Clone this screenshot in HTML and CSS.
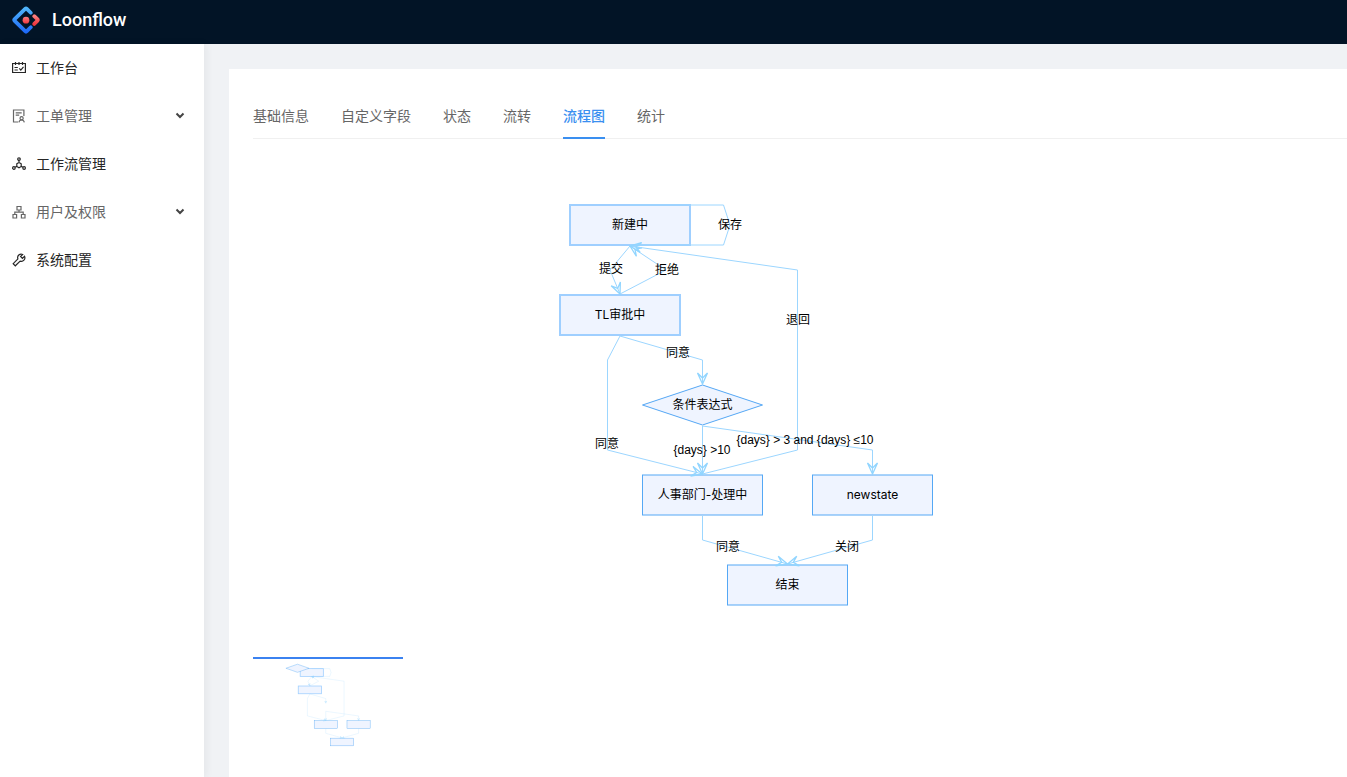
FILE: index.html
```html
<!DOCTYPE html>
<html lang="zh-CN">
<head>
<meta charset="utf-8">
<title>Loonflow</title>
<link rel="stylesheet" href="styles.css">
</head>
<body>
<header class="header">
  <a class="brand" href="#">
    <svg class="logo" viewBox="0 0 200 200" aria-hidden="true">
      <defs>
        <linearGradient id="blue" x1="0" y1="0" x2="0" y2="1"><stop offset="0" stop-color="#4fb4fa"/><stop offset="1" stop-color="#1f6bf8"/></linearGradient>
        <linearGradient id="red" x1="0" y1="0" x2="0" y2="1"><stop offset="0" stop-color="#fa7e7e"/><stop offset="1" stop-color="#f0383f"/></linearGradient>
      </defs>
      <path d="M134 48 L106 20 Q100 14 94 20 L19 94 Q13 100 19 106 L94 180 Q100 186 106 180 L134 152" fill="none" stroke="url(#blue)" stroke-width="27" stroke-linecap="round"/>
      <path d="M159 73 L181 94 Q187 100 181 106 L159 128" fill="none" stroke="url(#red)" stroke-width="27" stroke-linecap="round"/>
      <circle cx="100" cy="101" r="24" fill="url(#red)"/>
    </svg>
    <span class="brand-name">Loonflow</span>
  </a>
</header>
<div class="layout">
  <nav class="sidebar">
    <a class="menu-item" href="#">
      <svg class="icon" viewBox="0 0 14 14" aria-hidden="true"><path d="M.6 2.500h12.800v9H.6zM3.500 1v3M7 1v3M10.500 1v3M2.500 6.500h3.300M2.500 9h3.300M7.300 7.400l1.500 1.700 2.700-3.200"/></svg>
      <span>工作台</span>
    </a>
    <button class="menu-item submenu" type="button">
      <svg class="icon" viewBox="0 0 14 14" aria-hidden="true"><path d="M6 13H1.500V1h10.400v6M3.700 3.800h6M3.700 6.200h3.500M6.900 13.400c.2-1.500 1.200-2.400 2.700-2.400s2.500.9 2.700 2.400"/><circle cx="9.600" cy="9.300" r="1.600"/></svg>
      <span>工单管理</span>
      <svg class="chevron" viewBox="0 0 10 10" aria-hidden="true"><path d="M1.500 2.500l3.500 3.500L8.500 2.500"/></svg>
    </button>
    <a class="menu-item" href="#">
      <svg class="icon" viewBox="0 0 14 14" aria-hidden="true"><circle cx="7" cy="2.100" r="1.300"/><circle cx="1.900" cy="11" r="1.300"/><circle cx="12.100" cy="11" r="1.300"/><path d="M7 3.500v2M4.800 6.800L7 5.500l2.200 1.300v2.600L7 10.700 4.800 9.400zM4.800 9.200l-1.700 1M9.200 9.200l1.700 1"/></svg>
      <span>工作流管理</span>
    </a>
    <button class="menu-item submenu" type="button">
      <svg class="icon" viewBox="0 0 14 14" aria-hidden="true"><path d="M5 1.500h4v3.500H5zM1 9.500h3.600V13H1zM9.400 9.500H13V13H9.400zM7 5v2.200M2.800 9.500V7.200h8.400v2.300"/></svg>
      <span>用户及权限</span>
      <svg class="chevron" viewBox="0 0 10 10" aria-hidden="true"><path d="M1.500 2.500l3.500 3.500L8.500 2.500"/></svg>
    </button>
    <a class="menu-item" href="#">
      <svg class="icon" viewBox="0 0 14 14" aria-hidden="true"><path d="M10.700 1.500a3.500 3.500 0 0 0-4.800 4.400L1.200 10.700l2.100 2.100L8.100 8.100a3.500 3.500 0 0 0 4.400-4.800L10.400 5.400 8.600 3.600z"/></svg>
      <span>系统配置</span>
    </a>
  </nav>
  <main class="content">
    <section class="card">
      <div class="tabs" role="tablist">
        <button class="tab" type="button" role="tab">基础信息</button>
        <button class="tab" type="button" role="tab">自定义字段</button>
        <button class="tab" type="button" role="tab">状态</button>
        <button class="tab" type="button" role="tab">流转</button>
        <button class="tab active" type="button" role="tab" aria-selected="true">流程图</button>
        <button class="tab" type="button" role="tab">统计</button>
      </div>
      <svg class="flow" width="800" height="502" viewBox="0 0 800 502" role="img" aria-label="流程图">
        <defs>
          <marker id="vee" markerUnits="userSpaceOnUse" markerWidth="16" markerHeight="16" viewBox="-13 -8 16 16" refX="0" refY="0" orient="auto">
            <path class="arrow" d="M0 0L-11 -5L-6 0L-11 5Z"/>
          </marker>
        </defs>
        <g id="boxes">
          <rect class="node visited" x="317" y="50" width="120" height="40"/>
          <rect class="node visited" x="307" y="140" width="120" height="40"/>
          <rect class="node" x="389.500" y="320" width="120" height="40"/>
          <rect class="node" x="559.500" y="320" width="120" height="40"/>
          <rect class="node" x="474.500" y="410" width="120" height="40"/>
        </g>
        <path class="node" d="M449.500 230L509.500 250L449.500 270L389.500 250Z"/>
        <g id="edges" class="edges">
          <path d="M377 50H470.500L477 70L470.500 90H377"/>
          <path d="M377 91L357 115L367 139"/>
          <path d="M367 139L413 115L377 91"/>
          <path d="M449.500 319L544.500 295V115L377 91"/>
          <path d="M367 181L354.500 205V295L449.500 319"/>
          <path d="M367 181L449.500 205V229"/>
          <path d="M449.500 271V319"/>
          <path d="M449.500 271L619.500 295V319"/>
          <path d="M449.500 361V385L534.500 409"/>
          <path d="M619.500 361V385L534.500 409"/>
        </g>
        <g class="labels">
          <text x="377" y="74">新建中</text>
          <text x="367" y="164">TL审批中</text>
          <text x="449.500" y="254">条件表达式</text>
          <text x="449.500" y="344">人事部门-处理中</text>
          <text x="619.500" y="344">newstate</text>
          <text x="534.500" y="434">结束</text>
        </g>
        <g class="labels edge-labels">
          <text x="477" y="74">保存</text>
          <text x="358" y="118">提交</text>
          <text x="414" y="119">拒绝</text>
          <text x="545" y="169">退回</text>
          <text x="425" y="202">同意</text>
          <text x="354" y="293">同意</text>
          <text x="449" y="299">{days} &gt;10</text>
          <text x="552" y="289">{days} &gt; 3 and {days} ≤10</text>
          <text x="475" y="396">同意</text>
          <text x="594" y="396">关闭</text>
        </g>
      </svg>
      <div class="minimap">
        <svg width="150" height="90" viewBox="0 0 150 90" aria-hidden="true">
          <g transform="translate(-14 0) scale(.193)">
            <use href="#boxes"/>
            <use href="#edges"/>
            <path class="node" d="M303 27L363 48L303 69L243 48Z"/>
          </g>
        </svg>
      </div>
    </section>
  </main>
</div>
</body>
</html>
```
FILE: styles.css
```css
* { box-sizing: border-box; }
body {
  margin: 0;
  min-height: 100vh;
  display: flex;
  flex-direction: column;
  background: #f0f2f5;
  font: 14px/22px "Liberation Sans", "Noto Sans CJK SC", sans-serif;
  color: #262626;
}
button { font: inherit; border: 0; background: none; padding: 0; cursor: pointer; }
a { color: inherit; text-decoration: none; }

.header { height: 44px; padding: 0 12px; background: #021426; display: flex; align-items: center; }
.brand { display: flex; align-items: center; gap: 12px; height: 40px; margin-bottom: 4px; color: #fff; }
.logo { width: 28px; height: 28px; }
.brand-name { font: 500 18px/28px Roboto, sans-serif; }

.layout { flex: 1; display: flex; }
.sidebar { width: 204px; flex: none; background: #fff; box-shadow: 2px 0 8px rgba(29, 35, 41, .06); }
.menu-item { width: 100%; height: 48px; padding: 0 19px 0 12px; display: flex; align-items: center; gap: 10px; color: #262626; text-align: left; }
.submenu { color: #666; }
.icon { width: 14px; height: 14px; fill: none; stroke: currentColor; stroke-width: 1.2; }
.chevron { width: 10px; height: 10px; margin-left: auto; fill: none; stroke: #444; stroke-width: 2; }

.content { flex: 1; min-width: 0; padding: 25px 0 0 25px; display: flex; }
.card { flex: 1; min-width: 0; overflow: hidden; padding: 24px 0 24px 24px; background: #fff; }
.tabs { display: flex; gap: 32px; border-bottom: 1px solid #f0f0f0; margin-bottom: 16px; }
.tab { padding: 13px 0 11px; margin-bottom: -1px; color: #666; border-bottom: 2px solid transparent; line-height: 20px; }
.tab.active { color: #3a8ff0; border-color: #3a8ff0; font-weight: 500; }

.flow { display: block; --line: 1; --frame: 2; }
.node { fill: #eff4ff; stroke: #55a8f5; stroke-width: var(--line); }
.visited { stroke: #9fcfff; stroke-width: var(--frame); }
.edges path { fill: none; stroke: #9cd6ff; stroke-width: 1; marker-end: url(#vee); }
.edges path:first-child { marker-end: none; }
.arrow { fill: none; stroke: #91d5ff; stroke-width: 1.3; }
.labels { font: 12px Inter, "Noto Sans CJK SC", sans-serif; fill: #000; text-anchor: middle; }
.edge-labels { font-family: "Liberation Sans", "Noto Sans CJK SC", sans-serif; }

.minimap { width: 150px; border-top: 2px solid #3b82f0; --line: 2; --frame: 4; }
.minimap svg { display: block; }
```
